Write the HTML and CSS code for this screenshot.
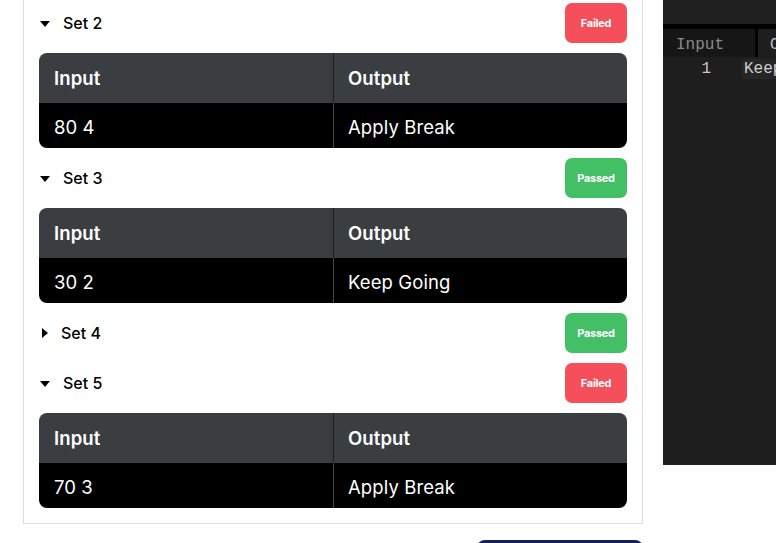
FILE: index.html
```html
<!DOCTYPE html>
<html>
<head>
<meta charset="utf-8">
<link rel="stylesheet" href="styles.css">
</head>
<body>
<div class="page">
  <div class="left">
    <div class="card">
      <div class="set">
        <div class="set-head">
          <span class="caret down"></span><span class="set-name">Set 2</span>
          <span class="badge fail">Failed</span>
        </div>
        <div class="io">
          <div class="io-row io-head"><div class="cell">Input</div><div class="cell">Output</div></div>
          <div class="io-row io-body"><div class="cell">80 4</div><div class="cell">Apply Break</div></div>
        </div>
      </div>
      <div class="set">
        <div class="set-head">
          <span class="caret down"></span><span class="set-name">Set 3</span>
          <span class="badge pass">Passed</span>
        </div>
        <div class="io">
          <div class="io-row io-head"><div class="cell">Input</div><div class="cell">Output</div></div>
          <div class="io-row io-body"><div class="cell">30 2</div><div class="cell">Keep Going</div></div>
        </div>
      </div>
      <div class="set">
        <div class="set-head">
          <span class="caret right"></span><span class="set-name">Set 4</span>
          <span class="badge pass">Passed</span>
        </div>
      </div>
      <div class="set">
        <div class="set-head">
          <span class="caret down"></span><span class="set-name">Set 5</span>
          <span class="badge fail">Failed</span>
        </div>
        <div class="io">
          <div class="io-row io-head"><div class="cell">Input</div><div class="cell">Output</div></div>
          <div class="io-row io-body"><div class="cell">70 3</div><div class="cell">Apply Break</div></div>
        </div>
      </div>
    </div>
    <div class="actions"><button class="submit"></button></div>
  </div>
  <div class="console">
    <div class="console-top"></div>
    <div class="console-tabs">
      <div class="tab">Input</div>
      <div class="tab active">Output</div>
    </div>
    <div class="console-line"><span class="ln">1</span><span class="code">Keep Going</span></div>
  </div>
</div>
</body>
</html>
```

FILE: styles.css
```css
html, body {
  margin: 0;
  padding: 0;
  background: #ffffff;
  overflow: hidden;
}
body {
  font-family: Inter, "Noto Sans", sans-serif;
  color: #111;
}
.page {
  display: flex;
  align-items: flex-start;
  gap: 20px;
  padding-left: 23px;
  margin-top: -15px;
}
.left {
  width: 620px;
  flex: none;
  display: flex;
  flex-direction: column;
}
.card {
  border: 1px solid #dddddd;
  padding: 17px 15px 5px 15px;
}
.set {
  margin-bottom: 10px;
}
.set-head {
  height: 40px;
  display: flex;
  align-items: center;
  margin-bottom: 10px;
}
.caret {
  width: 0;
  height: 0;
  display: inline-block;
}
.caret.down {
  border-left: 5px solid transparent;
  border-right: 5px solid transparent;
  border-top: 6px solid #000;
  margin: 1px 13px 0 1px;
}
.caret.right {
  border-top: 5px solid transparent;
  border-bottom: 5px solid transparent;
  border-left: 6px solid #000;
  margin: 0 13px 0 3px;
}
.set-name {
  font-size: 16px;
  font-weight: 500;
  color: #000;
}
.badge {
  margin-left: auto;
  width: 62px;
  height: 40px;
  border-radius: 7px;
  color: #fff;
  font-size: 11px;
  font-weight: 700;
  display: flex;
  align-items: center;
  justify-content: center;
  letter-spacing: -0.3px;
}
.badge.fail { background: #f54f5b; }
.badge.pass { background: #43bf66; }
.io {
  border-radius: 8px;
  overflow: hidden;
  color: #fff;
}
.io-row {
  display: grid;
  grid-template-columns: 294px 1fr;
}
.io-head {
  background: #3a3e41;
  height: 50px;
  font-size: 18.5px;
  font-weight: 600;
}
.io-body {
  background: #000;
  height: 45px;
  font-size: 18.5px;
  font-weight: 400;
}
.cell {
  display: flex;
  align-items: center;
  padding-left: 15px;
  letter-spacing: 0.1px;
}
.io-body .cell { padding-top: 2px; }
.io-head .cell + .cell { border-left: 1px solid #1c1d1f; padding-left: 14px; }
.io-body .cell + .cell { border-left: 1px solid #444; padding-left: 14px; }
.actions {
  display: flex;
  justify-content: flex-end;
  padding-top: 16px;
}
.submit {
  width: 166px;
  height: 40px;
  border: none;
  border-radius: 8px;
  background: #15215a;
}
.console {
  flex: 1;
  min-width: 0;
  height: 480px;
  background: #1e1e1e;
  font-family: "Liberation Mono", "DejaVu Sans Mono", monospace;
  font-size: 16px;
  white-space: nowrap;
  overflow: hidden;
}
.console-top {
  height: 39px;
  background: #1f1f1f;
  border-bottom: 5px solid #000;
}
.console-tabs {
  display: flex;
  height: 28px;
  background: #000;
  gap: 3px;
}
.tab {
  flex: none;
  background: #161616;
  color: #8a8a8a;
  padding: 3px 12px 0 13px;
  width: 67px;
  display: flex;
  align-items: center;
}
.tab.active {
  background: #1e1e1e;
  color: #bdbdbd;
  width: auto;
  padding-left: 12px;
}
.console-line {
  display: flex;
  align-items: center;
  height: 24px;
}
.ln {
  width: 48px;
  text-align: right;
  color: #c8c8c8;
  padding-right: 31px;
  flex: none;
}
.code {
  color: #cfcfcf;
  background: #262626;
  padding: 1px 2px;
}
```
